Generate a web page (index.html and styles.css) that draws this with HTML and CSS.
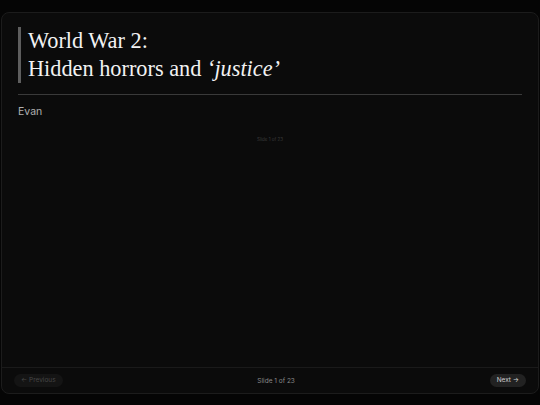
FILE: index.html
```html
<!DOCTYPE html>
<html>
<head>
<meta charset="utf-8">
<link rel="stylesheet" href="styles.css">
</head>
<body>
<div class="deck">
  <main class="slide">
    <h1 class="title">World War 2:<br>Hidden horrors and <em>‘justice’</em></h1>
    <hr class="rule">
    <p class="author">Evan</p>
    <div class="stage">
      <p class="counter-small">Slide 1 of 23</p>
    </div>
  </main>
  <footer class="nav">
    <button class="btn btn-prev">← Previous</button>
    <span class="counter">Slide 1 of 23</span>
    <button class="btn btn-next">Next →</button>
  </footer>
</div>
</body>
</html>
```
FILE: styles.css
```css
html, body {
  margin: 0;
  padding: 0;
  background: #050505;
  height: 405px;
  overflow: hidden;
}
body {
  padding: 12px 1px 11px;
  box-sizing: border-box;
  font-family: Inter, "Liberation Sans", sans-serif;
}
.deck {
  height: 100%;
  box-sizing: border-box;
  background: #0b0b0b;
  border: 1px solid #1c1c1c;
  border-radius: 8px;
  display: flex;
  flex-direction: column;
}
.slide {
  flex: 1;
  display: flex;
  flex-direction: column;
  padding: 14px 16px 0;
}
.title {
  margin: 0;
  font-family: "Liberation Serif", serif;
  font-weight: normal;
  font-size: 22.3px;
  line-height: 28px;
  color: #f2f2f2;
  border-left: 3px solid #5e5e5e;
  padding-left: 7px;
}
.title em {
  font-style: italic;
}
.rule {
  margin: 11px 0 0;
  border: 0;
  border-top: 1px solid #3a3a3a;
  height: 0;
}
.author {
  margin: 10px 0 0;
  font-size: 10.5px;
  line-height: 13px;
  color: #b0b0b0;
}
.stage {
  flex: 1;
  display: flex;
  justify-content: center;
}
.counter-small {
  margin: 19px 0 0;
  font-size: 4.5px;
  line-height: 6px;
  color: #3a3a3a;
}
.nav {
  border-top: 1px solid #1a1a1a;
  height: 25px;
  padding: 0 12px;
  display: flex;
  align-items: center;
  justify-content: space-between;
}
.btn {
  border: 0;
  border-radius: 7px;
  height: 13px;
  padding: 0 7px;
  font-family: Inter, "Liberation Sans", sans-serif;
  font-size: 6.5px;
  line-height: 13px;
}
.btn-prev {
  background: #141414;
  color: #474747;
}
.btn-next {
  background: #222222;
  color: #cfcfcf;
}
.counter {
  font-size: 6.5px;
  color: #8a8a8a;
}
```
